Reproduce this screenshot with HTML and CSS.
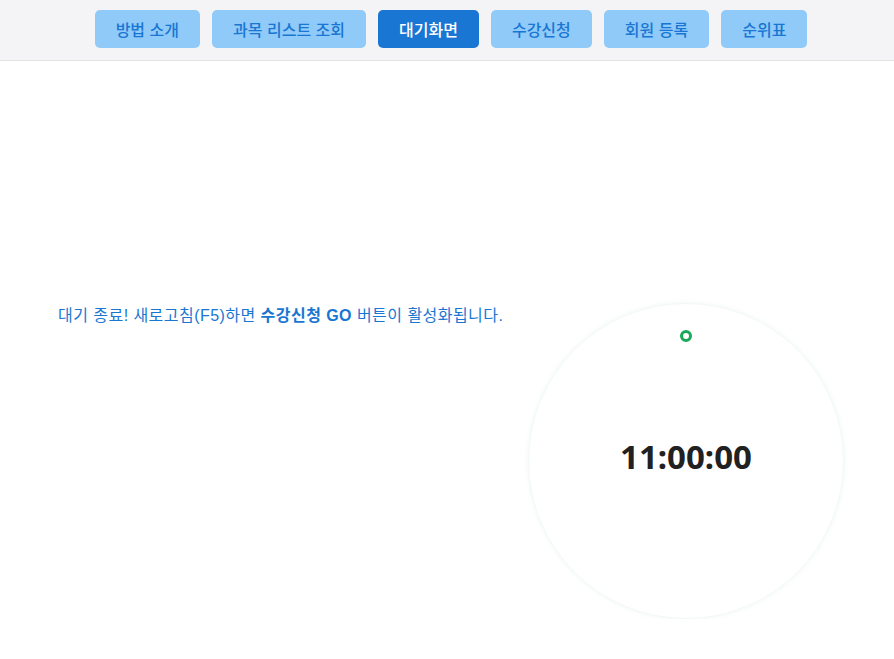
FILE: index.html
```html
<!DOCTYPE html>
<html lang="ko">
<head>
<meta charset="utf-8">
<link rel="stylesheet" href="styles.css">
</head>
<body>
<nav class="topnav">
  <button class="nav-btn">방법 소개</button>
  <button class="nav-btn">과목 리스트 조회</button>
  <button class="nav-btn active">대기화면</button>
  <button class="nav-btn">수강신청</button>
  <button class="nav-btn">회원 등록</button>
  <button class="nav-btn">순위표</button>
</nav>
<main class="content">
  <p class="notice">대기 종료! 새로고침(F5)하면 <strong>수강신청 GO</strong> 버튼이 활성화됩니다.</p>
  <div class="clock">
    <span class="clock-dot"></span>
    <span class="clock-time">11:00:00</span>
  </div>
</main>
</body>
</html>
```
FILE: styles.css
```css
html, body {
  margin: 0;
  padding: 0;
  background: #ffffff;
  font-family: "Liberation Sans", "Noto Sans CJK KR", sans-serif;
}
.topnav {
  display: flex;
  justify-content: center;
  gap: 12px;
  padding: 10px 0 12px 8px;
  background: #f4f4f6;
  border-bottom: 1px solid #e2e2e4;
  height: 38px;
}
.nav-btn {
  height: 38px;
  padding: 0 21px;
  border: none;
  border-radius: 5px;
  background: #90caf9;
  color: #1976d2;
  font-family: "Noto Sans CJK KR", sans-serif;
  font-size: 16px;
  font-weight: 500;
}
.nav-btn.active {
  background: #1976d2;
  color: #ffffff;
}
.content {
  display: flex;
  justify-content: space-between;
  align-items: flex-start;
  padding: 242px 50px 0 58px;
}
.notice {
  margin: 0;
  padding-top: 2px;
  color: #1976d2;
  font-size: 16px;
  line-height: 22px;
  letter-spacing: 0.46px;
  font-family: "Liberation Sans", "Noto Sans CJK KR", sans-serif;
}
.notice strong {
  font-weight: 700;
}
.clock {
  position: relative;
  width: 314px;
  height: 314px;
  border-radius: 50%;
  border: 1px solid #f2f8f5;
  box-shadow: 0 0 5px rgba(30, 150, 100, 0.08);
  display: flex;
  align-items: center;
  justify-content: center;
}
.clock-dot {
  position: absolute;
  left: 151px;
  top: 26px;
  width: 6px;
  height: 6px;
  border: 3px solid #1aa75a;
  border-radius: 50%;
}
.clock-time {
  padding-bottom: 9px;
  font-family: "Noto Sans", sans-serif;
  font-weight: 700;
  font-size: 33px;
  color: #212121;
}
```
